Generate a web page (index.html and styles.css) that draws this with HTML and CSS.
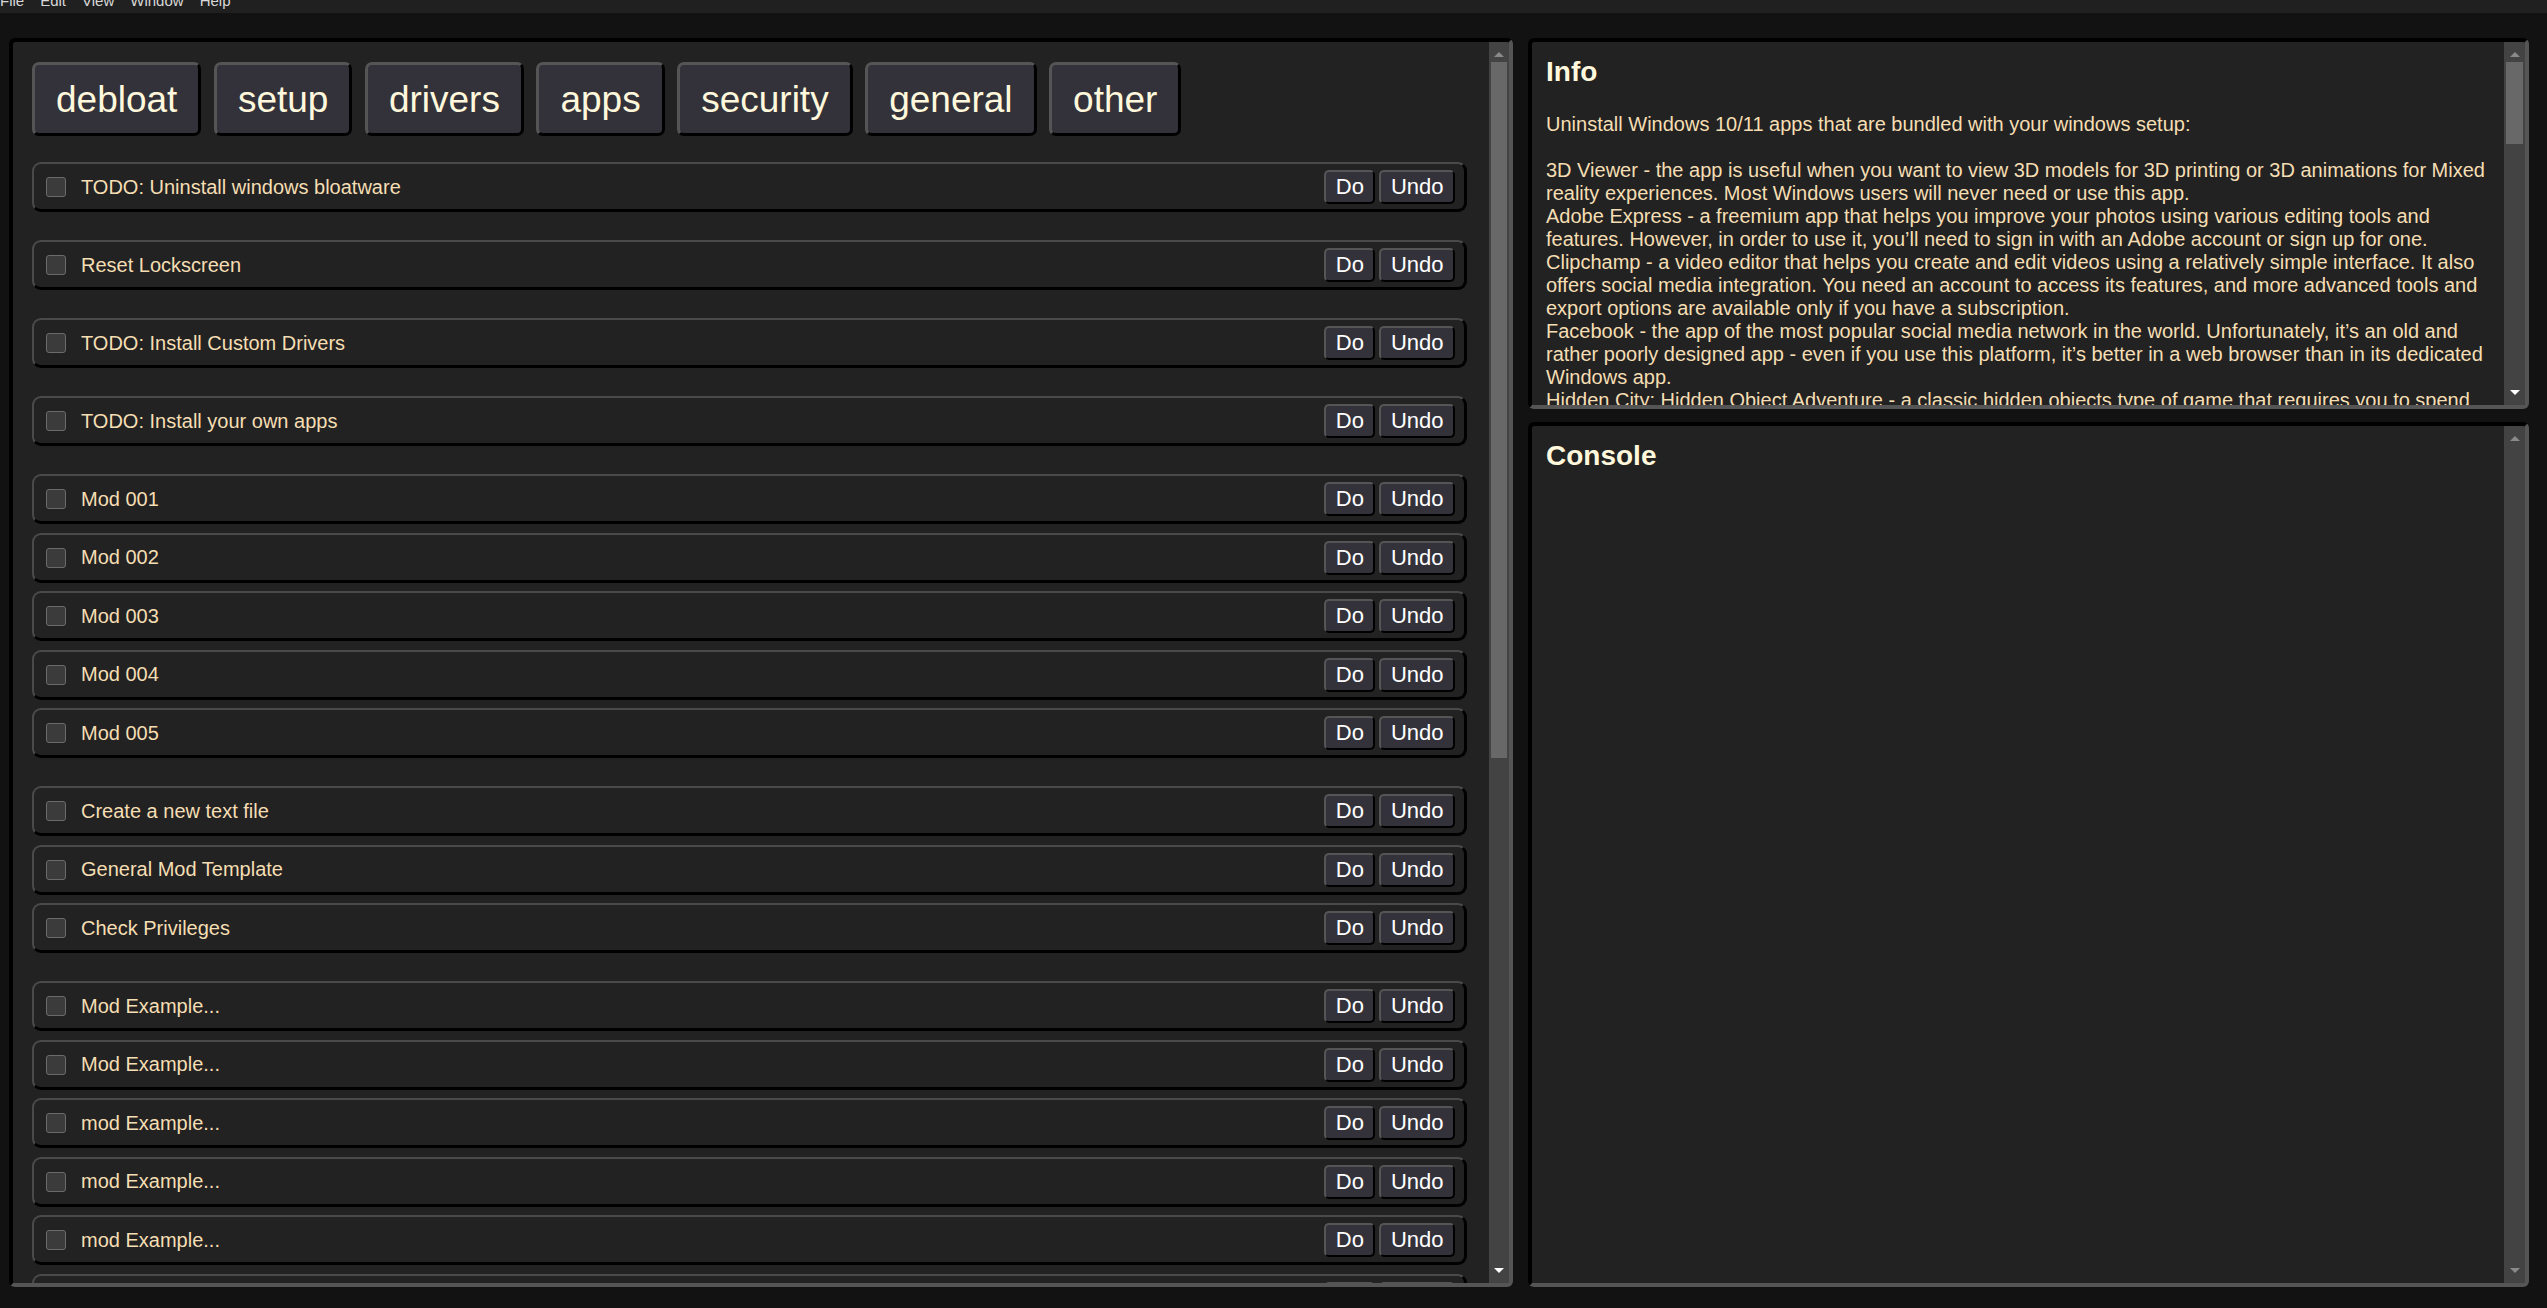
FILE: index.html
```html
<!DOCTYPE html>
<html lang="en">
<head>
<meta charset="utf-8">
<title>Mod Manager</title>
<link rel="stylesheet" href="styles.css">
</head>
<body>
<div class="menubar">
  <div class="menu-items">
    <span class="menu-item">File</span>
    <span class="menu-item">Edit</span>
    <span class="menu-item">View</span>
    <span class="menu-item">Window</span>
    <span class="menu-item">Help</span>
  </div>
</div>
<div class="main">
  <section class="panel left-panel">
    <div class="panel-content mods">
      <div class="tabs">
        <button class="tab">debloat</button>
        <button class="tab">setup</button>
        <button class="tab">drivers</button>
        <button class="tab">apps</button>
        <button class="tab">security</button>
        <button class="tab">general</button>
        <button class="tab">other</button>
      </div>
      <div class="group">
        <div class="row"><span class="box"></span><span class="label">TODO: Uninstall windows bloatware</span><span class="actions"><button class="act">Do</button><button class="act">Undo</button></span></div>
      </div>
      <div class="group">
        <div class="row"><span class="box"></span><span class="label">Reset Lockscreen</span><span class="actions"><button class="act">Do</button><button class="act">Undo</button></span></div>
      </div>
      <div class="group">
        <div class="row"><span class="box"></span><span class="label">TODO: Install Custom Drivers</span><span class="actions"><button class="act">Do</button><button class="act">Undo</button></span></div>
      </div>
      <div class="group">
        <div class="row"><span class="box"></span><span class="label">TODO: Install your own apps</span><span class="actions"><button class="act">Do</button><button class="act">Undo</button></span></div>
      </div>
      <div class="group">
        <div class="row"><span class="box"></span><span class="label">Mod 001</span><span class="actions"><button class="act">Do</button><button class="act">Undo</button></span></div>
        <div class="row"><span class="box"></span><span class="label">Mod 002</span><span class="actions"><button class="act">Do</button><button class="act">Undo</button></span></div>
        <div class="row"><span class="box"></span><span class="label">Mod 003</span><span class="actions"><button class="act">Do</button><button class="act">Undo</button></span></div>
        <div class="row"><span class="box"></span><span class="label">Mod 004</span><span class="actions"><button class="act">Do</button><button class="act">Undo</button></span></div>
        <div class="row"><span class="box"></span><span class="label">Mod 005</span><span class="actions"><button class="act">Do</button><button class="act">Undo</button></span></div>
      </div>
      <div class="group">
        <div class="row"><span class="box"></span><span class="label">Create a new text file</span><span class="actions"><button class="act">Do</button><button class="act">Undo</button></span></div>
        <div class="row"><span class="box"></span><span class="label">General Mod Template</span><span class="actions"><button class="act">Do</button><button class="act">Undo</button></span></div>
        <div class="row"><span class="box"></span><span class="label">Check Privileges</span><span class="actions"><button class="act">Do</button><button class="act">Undo</button></span></div>
      </div>
      <div class="group">
        <div class="row"><span class="box"></span><span class="label">Mod Example...</span><span class="actions"><button class="act">Do</button><button class="act">Undo</button></span></div>
        <div class="row"><span class="box"></span><span class="label">Mod Example...</span><span class="actions"><button class="act">Do</button><button class="act">Undo</button></span></div>
        <div class="row"><span class="box"></span><span class="label">mod Example...</span><span class="actions"><button class="act">Do</button><button class="act">Undo</button></span></div>
        <div class="row"><span class="box"></span><span class="label">mod Example...</span><span class="actions"><button class="act">Do</button><button class="act">Undo</button></span></div>
        <div class="row"><span class="box"></span><span class="label">mod Example...</span><span class="actions"><button class="act">Do</button><button class="act">Undo</button></span></div>
        <div class="row"><span class="box"></span><span class="label">mod Example...</span><span class="actions"><button class="act">Do</button><button class="act">Undo</button></span></div>
        <div class="row"><span class="box"></span><span class="label">mod Example...</span><span class="actions"><button class="act">Do</button><button class="act">Undo</button></span></div>
      </div>
    </div>
    <div class="vbar">
      <div class="arrow up dim"></div>
      <div class="track"><div class="thumb" style="height:696px"></div></div>
      <div class="arrow down"></div>
    </div>
  </section>
  <div class="right-col">
    <section class="panel info-panel">
      <div class="panel-content text-content">
        <h2 class="panel-title">Info</h2>
        <p class="info-text">Uninstall Windows 10/11 apps that are bundled with your windows setup:

3D Viewer - the app is useful when you want to view 3D models for 3D printing or 3D animations for Mixed reality experiences. Most Windows users will never need or use this app.
Adobe Express - a freemium app that helps you improve your photos using various editing tools and features. However, in order to use it, you’ll need to sign in with an Adobe account or sign up for one.
Clipchamp - a video editor that helps you create and edit videos using a relatively simple interface. It also offers social media integration. You need an account to access its features, and more advanced tools and export options are available only if you have a subscription.
Facebook - the app of the most popular social media network in the world. Unfortunately, it’s an old and rather poorly designed app - even if you use this platform, it’s better in a web browser than in its dedicated Windows app.
Hidden City: Hidden Object Adventure - a classic hidden objects type of game that requires you to spend hours looking for items in detailed scenes.
Instagram - the app of the popular photo sharing network.</p>
      </div>
      <div class="vbar">
        <div class="arrow up dim"></div>
        <div class="track"><div class="thumb" style="height:82px"></div></div>
        <div class="arrow down"></div>
      </div>
    </section>
    <section class="panel console-panel">
      <div class="panel-content text-content">
        <h2 class="panel-title">Console</h2>
      </div>
      <div class="vbar">
        <div class="arrow up dim"></div>
        <div class="track"></div>
        <div class="arrow down dim"></div>
      </div>
    </section>
  </div>
</div>
</body>
</html>
```
FILE: styles.css
```css
* { box-sizing: border-box; }
html, body { height: 100%; }
body {
  margin: 0;
  background: #121212;
  font-family: "Liberation Sans", Arial, sans-serif;
  overflow: hidden;
}
.menubar {
  height: 13px;
  background: #202020;
  overflow: hidden;
}
.menu-items {
  display: flex;
  gap: 16px;
  margin-top: -7px;
  font-size: 15px;
  line-height: 15px;
  color: #d8d8d8;
}
.main {
  display: flex;
  gap: 15px;
  height: 1295px;
  padding: 25px 18px 21px 9px;
}
.panel {
  display: flex;
  background: #222222;
  border: 4px solid;
  border-color: #000 #555 #555 #000;
  border-radius: 6px;
  overflow: hidden;
}
.left-panel {
  width: 1504px;
  flex: none;
}
.right-col {
  flex: 1;
  display: flex;
  flex-direction: column;
  gap: 13px;
}
.info-panel { height: 371px; flex: none; }
.console-panel { flex: 1; }
.panel-content {
  flex: 1;
  min-width: 0;
  overflow: hidden;
}
.mods {
  padding: 20px 22px 0 19px;
}
.tabs {
  display: flex;
  gap: 12.5px;
  margin-bottom: 26px;
}
.tab {
  height: 74px;
  padding: 2px 21px 0;
  font-family: "Liberation Sans", Arial, sans-serif;
  font-size: 37px;
  color: #fff8dc;
  background: #33323a;
  border: 3px solid;
  border-color: #555 #000 #000 #555;
  border-radius: 7px;
}
.group {
  display: flex;
  flex-direction: column;
  gap: 8.5px;
  margin-bottom: 28px;
}
.row {
  display: flex;
  align-items: center;
  height: 50px;
  padding: 1px 9px 0 12px;
  border: 2px solid;
  border-width: 2px 3px 3px 2px;
  border-color: #4a4a4a #000 #000 #4a4a4a;
  border-radius: 9px;
  background: #222222;
}
.box {
  width: 20px;
  height: 20px;
  flex: none;
  background: #3b3b3b;
  border: 1px solid #6b6b6b;
  border-radius: 3px;
}
.label {
  flex: 1;
  margin-left: 15px;
  font-size: 20px;
  color: #f5deb3;
  white-space: nowrap;
}
.actions {
  display: flex;
  gap: 4px;
}
.act {
  height: 34px;
  padding: 0 9.5px;
  font-family: "Liberation Sans", Arial, sans-serif;
  font-size: 22px;
  color: #ffffff;
  background: #33323a;
  border: 2px solid;
  border-color: #555 #000 #000 #555;
  border-radius: 5px;
}
.text-content {
  padding: 14px 14px 0 14px;
}
.panel-title {
  margin: 0;
  font-size: 28px;
  line-height: 32px;
  font-weight: bold;
  color: #fff8dc;
}
.info-text {
  margin: 24.5px 0 0;
  font-size: 20px;
  line-height: 23px;
  color: #f5deb3;
  white-space: pre-wrap;
}
.vbar {
  width: 20px;
  flex: none;
  display: flex;
  flex-direction: column;
  background: #434343;
}
.right-col .vbar { width: 21px; }
.arrow {
  height: 20px;
  flex: none;
  display: flex;
  justify-content: center;
}
.arrow.up { align-items: flex-end; padding-bottom: 5px; }
.arrow.down { align-items: flex-start; padding-top: 5px; }
.arrow.up::before {
  content: "";
  border-left: 5px solid transparent;
  border-right: 5px solid transparent;
  border-bottom: 5px solid #ffffff;
}
.arrow.down::before {
  content: "";
  border-left: 5px solid transparent;
  border-right: 5px solid transparent;
  border-top: 5px solid #ffffff;
}
.arrow.up.dim::before { border-bottom-color: #8a8a8a; }
.arrow.down.dim::before { border-top-color: #8a8a8a; }
.track {
  flex: 1;
  padding: 0 2px;
}
.thumb {
  background: #686868;
}
```
